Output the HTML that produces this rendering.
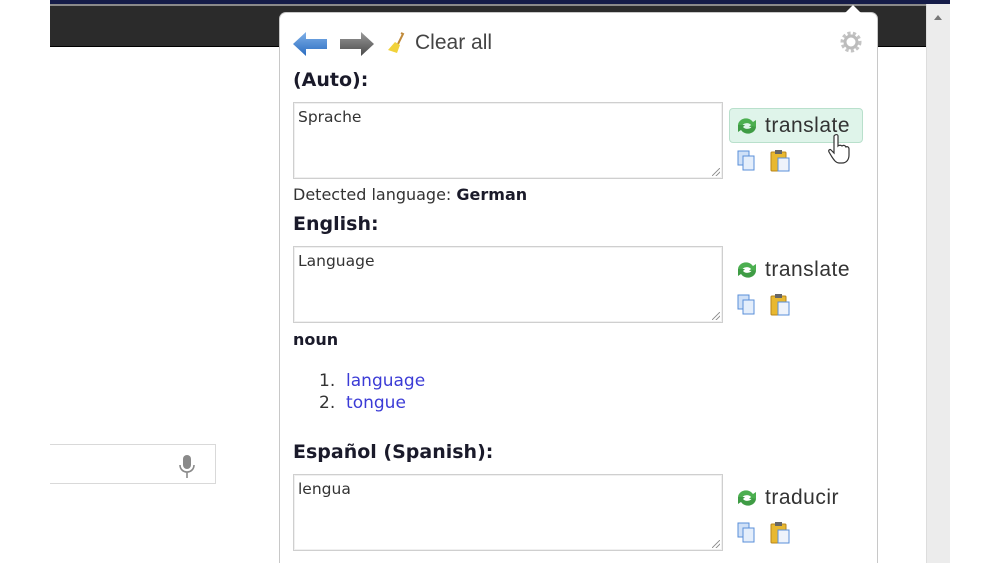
<!DOCTYPE html>
<html style="width:1000px;height:563px;overflow:hidden"><head><meta charset="utf-8"><style>
*{margin:0;padding:0;box-sizing:border-box}
body{width:1000px;height:563px;overflow:hidden;background:#fff;font-family:"DejaVu Sans",sans-serif;color:#222}
#w{position:relative;width:1000px;height:563px;overflow:hidden}
.a{position:absolute;white-space:nowrap}
.h{font-family:"DejaVu Sans",sans-serif;font-weight:bold;font-size:19px;color:#1a1a2a}
.ta{position:absolute;border:1px solid #cfcfcf;box-shadow:inset 0 0 0 1px #f0f0f0;background:#fff;font-family:"DejaVu Sans",sans-serif;font-size:15.5px;color:#333;padding:4px 4px;line-height:20px}
.grip{position:absolute;right:2px;bottom:2px;width:8px;height:8px;background:linear-gradient(135deg,transparent 45%,#999 46%,#999 54%,transparent 55%,transparent 70%,#999 71%,#999 79%,transparent 80%)}
.tr{font-family:"Liberation Sans",sans-serif;font-size:21px;color:#333;letter-spacing:.5px}
.lnk{color:#3b3bd6}
</style></head><body><div id="w">
<div class="a" style="left:50px;top:0;width:900px;height:4px;background:#151c48"></div>
<div class="a" style="left:50px;top:4px;width:876px;height:2px;background:#8a8a8a"></div>
<div class="a" style="left:50px;top:6px;width:876px;height:41px;background:#2b2b2b;border-bottom:1px solid #000"></div>
<div class="a" style="left:926px;top:4px;width:24px;height:559px;background:#ececec;border-left:1px solid #ddd"></div>
<div class="a" style="left:934px;top:15px;width:0;height:0;border-left:4px solid transparent;border-right:4px solid transparent;border-bottom:5px solid #777"></div>
<div class="a" style="left:50px;top:444px;width:166px;height:40px;border:1px solid #d9d9d9;border-left:none;background:#fff"></div>
<svg class="a" style="left:177px;top:454px" width="20" height="26" viewBox="0 0 20 26"><rect x="6" y="1" width="8" height="14" rx="4" fill="#8a8a8a"/><path d="M3 11c0 4 3 7 7 7s7-3 7-7" fill="none" stroke="#8a8a8a" stroke-width="1.6"/><path d="M10 18v6" stroke="#8a8a8a" stroke-width="1.6"/></svg>
<div class="a" style="left:279px;top:12px;width:599px;height:551px;background:#fff;border:1px solid #c8c8c8;border-bottom:none;border-radius:7px 7px 0 0"></div>
<div class="a" style="left:845px;top:5px;width:0;height:0;border-left:8px solid transparent;border-right:8px solid transparent;border-bottom:8px solid #fff"></div>
<svg class="a" style="left:292px;top:31px" width="36" height="26" viewBox="0 0 36 26"><defs><linearGradient id="b" x1="0" y1="0" x2="0" y2="1"><stop offset="0" stop-color="#7fb0e8"/><stop offset="1" stop-color="#2a6cc0"/></linearGradient><linearGradient id="g" x1="0" y1="0" x2="0" y2="1"><stop offset="0" stop-color="#9a9a9a"/><stop offset="1" stop-color="#4a4a4a"/></linearGradient></defs><path d="M1 13L14 1v7h21v10H14v7z" fill="url(#b)"/></svg>
<svg class="a" style="left:339px;top:31px" width="36" height="26" viewBox="0 0 36 26"><path d="M35 13L22 1v7H1v10h21v7z" fill="url(#g)"/></svg>
<svg class="a" style="left:386px;top:31px" width="20" height="24" viewBox="0 0 20 24"><path d="M15 2l2 1-5 10" stroke="#c08a3a" stroke-width="2" fill="none"/><path d="M9 11l5 3-3 8-9-3z" fill="#f1d23a"/></svg>
<div class="a" style="left:415px;top:30px;font-family:'Liberation Sans',sans-serif;font-size:21px;color:#444;line-height:26px">Clear all</div>
<svg class="a" style="left:840px;top:31px" width="22" height="22" viewBox="0 0 22 22"><circle cx="11" cy="11" r="8.5" fill="none" stroke="#c4c4c4" stroke-width="4" stroke-dasharray="3 2.2"/><circle cx="11" cy="11" r="6" fill="none" stroke="#bcbcbc" stroke-width="3"/></svg>

<div class="a h" style="left:293px;top:67px;line-height:26px">(Auto):</div>
<div class="ta" style="left:293px;top:102px;width:430px;height:77px">Sprache<div class="grip"></div></div>
<div class="a" style="left:729px;top:108px;width:134px;height:35px;background:#dff4ea;border:1px solid #b9e0cc;border-radius:4px"></div>
<svg class="a" style="left:735px;top:116px" width="24" height="20" viewBox="0 0 24 20"><path d="M3 9a8 7 0 0 1 15-3l3-2v7h-7l2-2a5 4 0 0 0-9 1z" fill="#4caf50"/><path d="M21 11a8 7 0 0 1-15 3l-3 2V9h7l-2 2a5 4 0 0 0 9-1z" fill="#3f9c45"/></svg>
<div class="a tr" style="left:765px;top:113px;line-height:26px">translate</div>
<svg class="a" style="left:826px;top:133px" width="28" height="32" viewBox="0 0 28 32"><path d="M9 2c2-1 3 0 3 1v10c1-1 3-1 4 0 1-1 3-1 4 1 1-1 3 0 3 2v6c0 4-2 8-7 8h-3c-3 0-5-3-7-6l-3-5c-1-2 1-3 2-2l3 3V3z" fill="#fff" stroke="#333" stroke-width="1.2"/></svg>
<svg class="a" style="left:737px;top:150px" width="20" height="22" viewBox="0 0 20 22"><rect x="1" y="1" width="11" height="14" fill="#cfe0f7" stroke="#5a8fd8"/><rect x="6" y="6" width="11" height="14" fill="#e4eefb" stroke="#5a8fd8"/></svg>
<svg class="a" style="left:770px;top:149px" width="22" height="24" viewBox="0 0 22 24"><rect x="1" y="3" width="15" height="19" rx="1" fill="#e8b830" stroke="#b8861a"/><rect x="5" y="1" width="7" height="4" fill="#666"/><rect x="8" y="9" width="11" height="13" fill="#eef3fb" stroke="#5a8fd8"/></svg>
<div class="a" style="left:293px;top:184px;font-size:16px;color:#333;line-height:22px">Detected language: <b style="color:#1a1a2a">German</b></div>

<div class="a h" style="left:293px;top:211px;line-height:26px">English:</div>
<div class="ta" style="left:293px;top:246px;width:430px;height:77px">Language<div class="grip"></div></div>
<svg class="a" style="left:735px;top:260px" width="24" height="20" viewBox="0 0 24 20"><path d="M3 9a8 7 0 0 1 15-3l3-2v7h-7l2-2a5 4 0 0 0-9 1z" fill="#4caf50"/><path d="M21 11a8 7 0 0 1-15 3l-3 2V9h7l-2 2a5 4 0 0 0 9-1z" fill="#3f9c45"/></svg>
<div class="a tr" style="left:765px;top:257px;line-height:26px">translate</div>
<svg class="a" style="left:737px;top:294px" width="20" height="22" viewBox="0 0 20 22"><rect x="1" y="1" width="11" height="14" fill="#cfe0f7" stroke="#5a8fd8"/><rect x="6" y="6" width="11" height="14" fill="#e4eefb" stroke="#5a8fd8"/></svg>
<svg class="a" style="left:770px;top:293px" width="22" height="24" viewBox="0 0 22 24"><rect x="1" y="3" width="15" height="19" rx="1" fill="#e8b830" stroke="#b8861a"/><rect x="5" y="1" width="7" height="4" fill="#666"/><rect x="8" y="9" width="11" height="13" fill="#eef3fb" stroke="#5a8fd8"/></svg>
<div class="a" style="left:293px;top:329px;font-size:16px;font-weight:bold;color:#1a1a2a;line-height:22px">noun</div>
<div class="a" style="left:319px;top:370px;font-size:17px;color:#333;line-height:22px">1.&nbsp; <span class="lnk">language</span><br>2.&nbsp; <span class="lnk">tongue</span></div>

<div class="a h" style="left:293px;top:439px;line-height:26px">Español (Spanish):</div>
<div class="ta" style="left:293px;top:474px;width:430px;height:77px">lengua<div class="grip"></div></div>
<svg class="a" style="left:735px;top:488px" width="24" height="20" viewBox="0 0 24 20"><path d="M3 9a8 7 0 0 1 15-3l3-2v7h-7l2-2a5 4 0 0 0-9 1z" fill="#4caf50"/><path d="M21 11a8 7 0 0 1-15 3l-3 2V9h7l-2 2a5 4 0 0 0 9-1z" fill="#3f9c45"/></svg>
<div class="a tr" style="left:765px;top:485px;line-height:26px">traducir</div>
<svg class="a" style="left:737px;top:522px" width="20" height="22" viewBox="0 0 20 22"><rect x="1" y="1" width="11" height="14" fill="#cfe0f7" stroke="#5a8fd8"/><rect x="6" y="6" width="11" height="14" fill="#e4eefb" stroke="#5a8fd8"/></svg>
<svg class="a" style="left:770px;top:521px" width="22" height="24" viewBox="0 0 22 24"><rect x="1" y="3" width="15" height="19" rx="1" fill="#e8b830" stroke="#b8861a"/><rect x="5" y="1" width="7" height="4" fill="#666"/><rect x="8" y="9" width="11" height="13" fill="#eef3fb" stroke="#5a8fd8"/></svg>
</div></body></html>
